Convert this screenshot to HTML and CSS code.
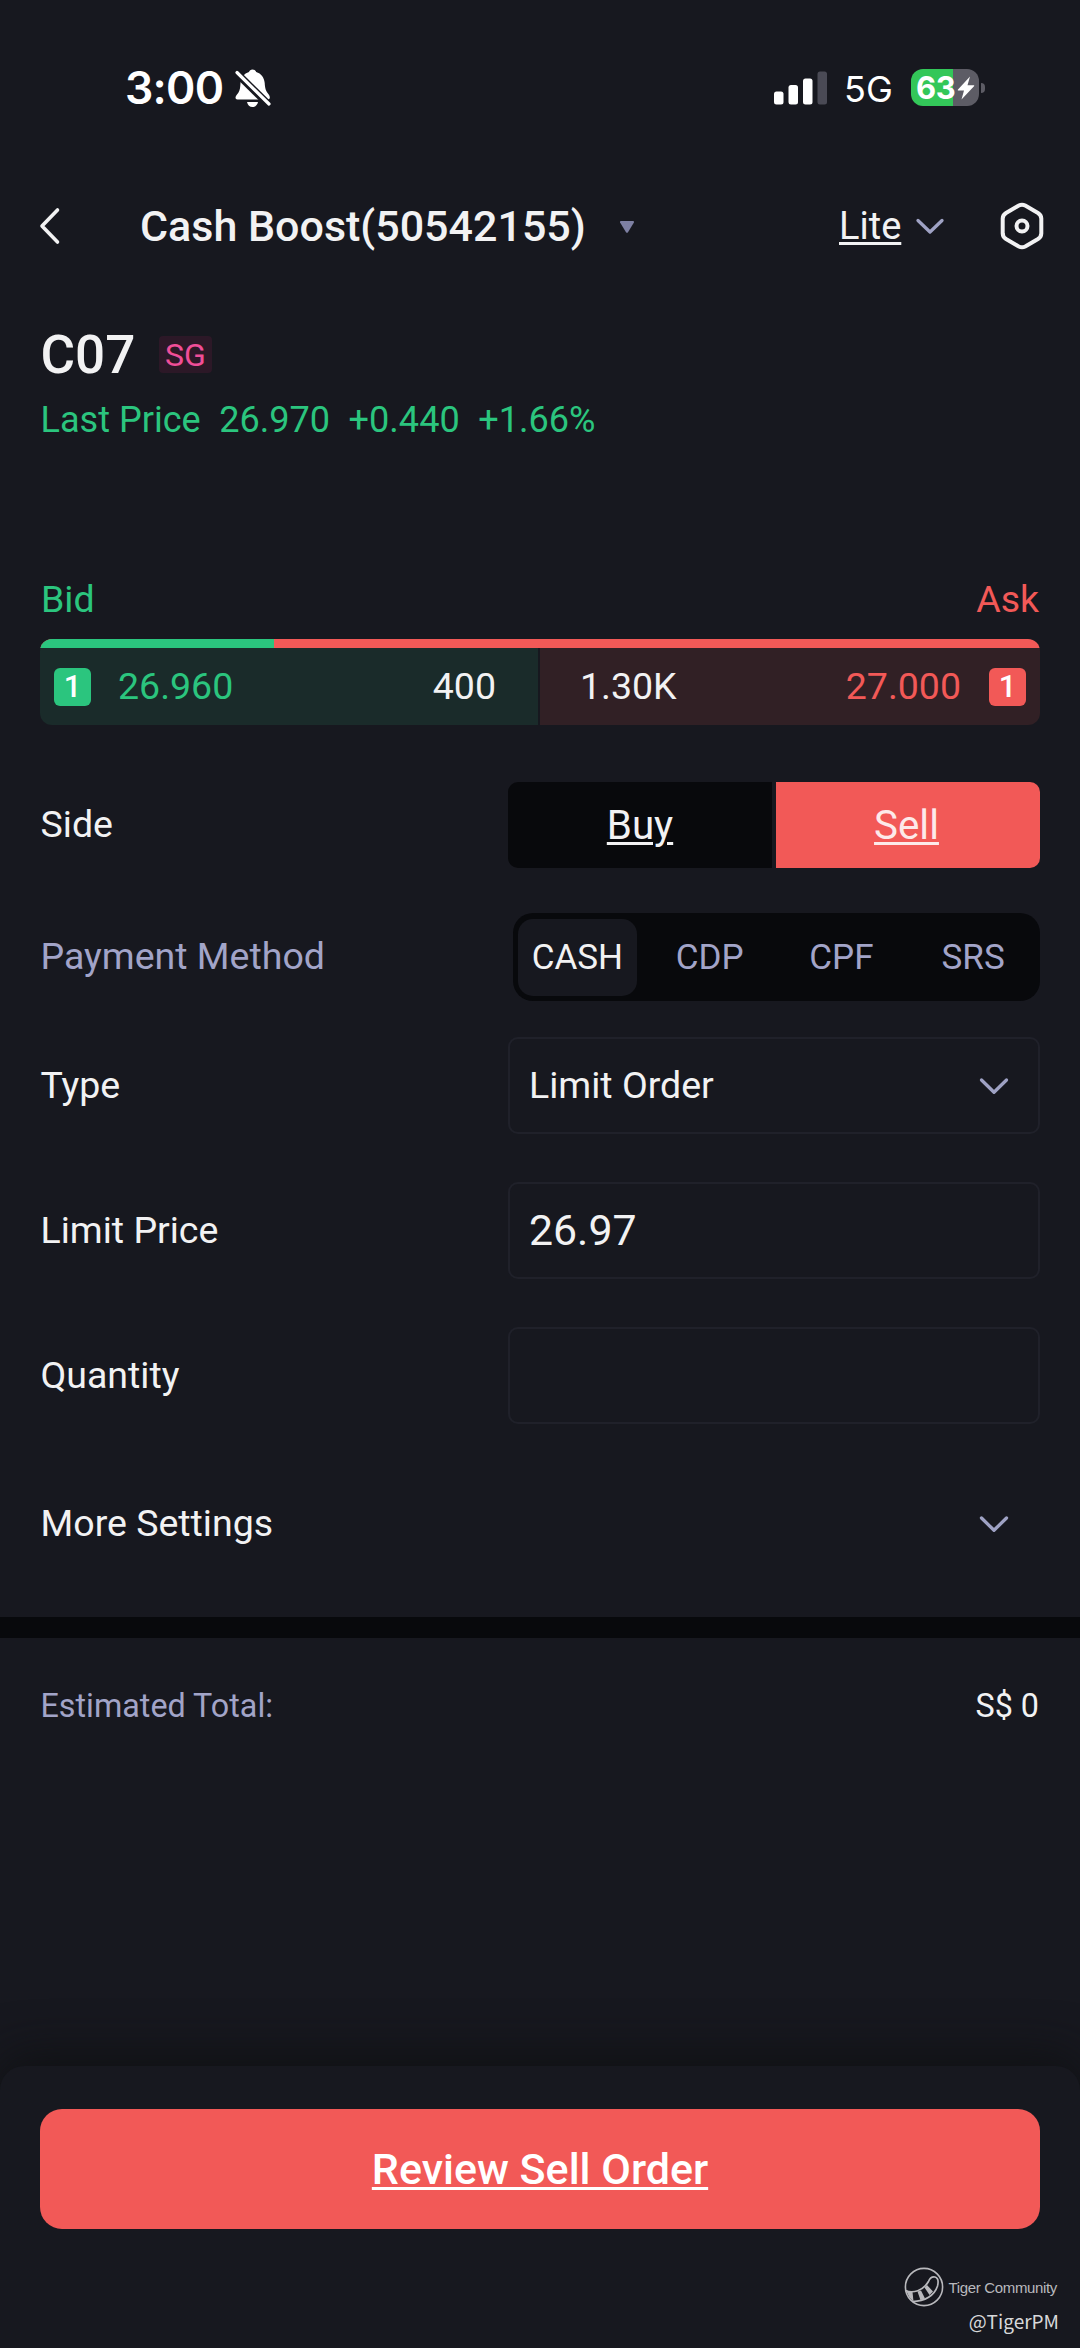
FILE: index.html
```html
<!DOCTYPE html>
<html lang="en">
<head>
<meta charset="utf-8">
<title>Cash Boost – Sell C07</title>
<link rel="stylesheet" href="styles.css">
</head>
<body>
<div class="screen">
  <div class="status">
    <span class="time">3:00</span>
    <svg class="bell" viewBox="0 0 36 38" width="36" height="38">
      <path d="M17.5 0.5c1.8 0 3.200 1 3.700 2.500c5 1.500 8 5.500 8.500 11c.3 5 .8 7.500 4 11.500c1 1.600 1.300 2.500 1 3.800c-.3 1-1 1.200-2 1.200H2.500c-1.300 0-2-.7-2-2c0-1.500 1.500-2.800 3-5c1.500-2.500 1.700-5 2-9.500c.5-5.500 3.500-9.500 8.500-11c.5-1.500 1.700-2.500 3.500-2.500z" fill="#fff"/>
      <path d="M12 33h11c-.6 3-2.700 5-5.500 5s-4.900-2-5.500-5z" fill="#fff"/>
      <path d="M0 2.500L34 36" stroke="#17181f" stroke-width="7.500"/>
      <path d="M2 3.500L34 35" stroke="#fff" stroke-width="3.200" stroke-linecap="round"/>
    </svg>
    <svg class="signal" viewBox="0 0 54 34" width="54" height="34">
      <rect x="0" y="20.500" width="9.500" height="13" rx="2.500" fill="#fff"/>
      <rect x="14.500" y="14" width="9.500" height="19.500" rx="2.500" fill="#fff"/>
      <rect x="29" y="7.500" width="9.500" height="26" rx="2.500" fill="#fff"/>
      <rect x="43.500" y="0.500" width="9.500" height="33" rx="2.500" fill="#4a4a55"/>
    </svg>
    <span class="net">5G</span>
    <div class="battery">
      <span class="level">63</span>
      <svg viewBox="0 0 18 24" width="18" height="24"><path d="M13 .5L1 13.500c-.4.500-.2 1 .4 1H7L4.500 23.500L17 10.300c.5-.5.2-1-.5-1H10.500z" fill="#fff"/></svg>
    </div>
    <span class="nub"></span>
  </div>

  <div class="nav">
    <svg class="back" viewBox="0 0 22 38" width="22" height="38"><path d="M18.500 3L3 19L18.500 35" fill="none" stroke="#f2f2f3" stroke-width="3.600" stroke-linecap="round" stroke-linejoin="round"/></svg>
    <span class="account">Cash Boost(50542155)</span>
    <svg class="caret" viewBox="0 0 16 14" width="16" height="14"><path d="M1.800 1h12.400q1.300.3.700 1.500L9 12.200q-1 1.300-2 0L1.100 2.500q-.6-1.200.7-1.500z" fill="#7e80a3"/></svg>
    <a class="mode">Lite</a>
    <svg class="chevron nav-chevron" viewBox="0 0 30 18" width="30" height="18"><path d="M3 3.500L15 15L27 3.500"/></svg>
    <svg class="hex" viewBox="0 0 44 48" width="44" height="48"><path d="M18.800 3.600Q22 1.900 25.200 3.600L38 11Q41.200 13 41.300 16.600V31.400Q41.200 35 38 37L25.200 44.400Q22 46.100 18.800 44.400L6 37Q2.800 35 2.700 31.400V16.600Q2.800 13 6 11Z"/><circle cx="22" cy="24" r="5.500"/></svg>
  </div>

  <div class="quote">
    <div class="ticker"><span class="symbol">C07</span><span class="market">SG</span></div>
    <div class="last"><span class="last-label">Last Price</span><span class="last-num">26.970</span><span class="last-num">+0.440</span><span class="last-pct">+1.66%</span></div>
  </div>

  <div class="order">
    <div class="book-head"><span class="bid">Bid</span><span class="ask">Ask</span></div>
    <div class="book">
      <div class="ratio"><div class="ratio-bid"></div></div>
      <div class="levels">
        <div class="level-bid"><span class="rank rank-bid">1</span><span class="price">26.960</span><span class="volume">400</span></div>
        <div class="level-ask"><span class="volume">1.30K</span><span class="price">27.000</span><span class="rank rank-ask">1</span></div>
      </div>
    </div>

    <div class="row side-row">
      <span class="label">Side</span>
      <div class="side"><a class="buy">Buy</a><a class="sell">Sell</a></div>
    </div>
    <div class="row pay-row">
      <span class="label pay-label">Payment Method</span>
      <div class="methods"><span class="method active">CASH</span><span class="method">CDP</span><span class="method">CPF</span><span class="method">SRS</span></div>
    </div>
    <div class="row type-row">
      <span class="label">Type</span>
      <div class="field"><span class="value">Limit Order</span><svg class="chevron" viewBox="0 0 30 18" width="30" height="18"><path d="M2.500 3L15 15.300L27.500 3"/></svg></div>
    </div>
    <div class="row field-row">
      <span class="label">Limit Price</span>
      <div class="field"><span class="value amount">26.97</span></div>
    </div>
    <div class="row field-row">
      <span class="label">Quantity</span>
      <div class="field"></div>
    </div>
    <div class="row more-row">
      <span class="label">More Settings</span>
      <svg class="chevron" viewBox="0 0 30 18" width="30" height="18"><path d="M2.500 3L15 15.300L27.500 3"/></svg>
    </div>
  </div>

  <div class="total"><span class="total-label">Estimated Total:</span><span class="total-value">S$ 0</span></div>

  <div class="sheet">
    <a class="submit">Review Sell Order</a>
    <div class="credit">
      <div class="brand">
        <svg viewBox="0 0 40 40" width="40" height="40">
          <circle cx="20" cy="20" r="18.600" fill="none" stroke="#b9b9bd" stroke-width="1.600"/>
          <path d="M1.500 23.500C9 26.500 19 24 24.500 14.500C26 10.500 28 9.500 31 10C34.500 11 34.500 15 33.500 19C30.500 28.500 21 34.500 8.500 34.500" fill="none" stroke="#b9b9bd" stroke-width="1.700"/>
          <path d="M2 23.500l6.500 1.500l1 9.500l-4-4zM13.500 24.500l3.500-1l4 8l-4.500 1.700zM20.500 20.500l2.500-2.500l6 6.500l-3.500 3.500z" fill="#b9b9bd"/>
        </svg>
        <span class="brand-name">Tiger Community</span>
      </div>
      <span class="handle">@TigerPM</span>
    </div>
  </div>
</div>
</body>
</html>
```

FILE: styles.css
```css
* { box-sizing: border-box; }

body {
  margin: 0;
  background: #17181f;
  color: #f2f2f3;
  font-family: Roboto, "Noto Sans", sans-serif;
  font-size: 37.5px;
}

.screen {
  width: 1080px;
  height: 2348px;
  display: flex;
  flex-direction: column;
  overflow: hidden;
}

.screen span, .screen a { white-space: nowrap; }
.screen svg { flex: none; display: block; }

/* Status bar */
.status {
  height: 175px;
  padding-left: 125px;
  display: flex;
  align-items: center;
  color: #fff;
  font-family: Inter, sans-serif;
}
.time { width: 109px; font-size: 44.5px; font-weight: 600; letter-spacing: -0.7px; }
.bell { margin-left: 1px; }
.signal { margin-left: 503px; }
.net { width: 67px; margin: 3px 0 0 16px; font-size: 36px; }
.battery {
  width: 68px;
  height: 37px;
  padding-left: 5px;
  border-radius: 12px;
  display: flex;
  align-items: center;
  background: linear-gradient(90deg, #33c759 0 42px, #5d5c65 42px);
}
.level { width: 41px; font-size: 31px; font-weight: 700; letter-spacing: -0.5px; }
.nub { width: 4px; height: 10px; margin-left: 2px; border-radius: 0 5px 5px 0; background: #5d5c65; }

/* Navigation */
.nav {
  height: 101px;
  padding-left: 39px;
  display: flex;
  align-items: center;
}
.account { width: 458px; margin-left: 79px; font-size: 43px; font-weight: 500; }
.caret { margin: 3px 0 0 21px; }
.mode {
  width: 62px;
  margin-left: 204px;
  font-size: 38px;
  text-decoration: underline;
  text-decoration-thickness: 3px;
  text-underline-offset: 3px;
}
.chevron path, .hex path, .hex circle { fill: none; stroke-linecap: round; stroke-linejoin: round; }
.chevron path { stroke: #9fa2c4; stroke-width: 3.3; }
.nav-chevron { margin-left: 14px; }
.hex { margin-left: 55px; }
.hex path, .hex circle { stroke: #f2f2f3; stroke-width: 4; }

/* Quote */
.quote { height: 269px; padding: 49px 40px 0 40.5px; }
.ticker { height: 59px; display: flex; align-items: center; }
.symbol { width: 118.500px; font-size: 53px; font-weight: 500; }
.market {
  width: 53px;
  height: 37px;
  border-radius: 4px;
  background: #2c1827;
  color: #f04e98;
  font-size: 32px;
  line-height: 38px;
  text-align: center;
}
.last { height: 46px; margin-top: 13px; display: flex; align-items: center; gap: 18.5px; color: #2bc57e; font-size: 36.1px; }

/* Order book */
.order { height: 1072px; padding: 29px 40px 0; }
.book-head { height: 50px; padding: 0 1px; display: flex; justify-content: space-between; align-items: center; }
.bid { color: #2bc57e; }
.ask { color: #f25957; }
.book { height: 86px; margin-top: 15px; border-radius: 12px; overflow: hidden; }
.ratio { height: 9px; background: #f25957; }
.ratio-bid { width: 234px; height: 9px; background: #2bc57e; }
.levels { display: flex; gap: 2px; height: 77px; }
.level-bid, .level-ask { display: flex; align-items: center; justify-content: space-between; }
.level-bid { width: 498px; padding: 0 42px 0 14px; background: #1a2b2a; }
.level-ask { width: 500px; padding: 0 14px 0 40px; background: #312025; }
.price, .volume { padding-bottom: 1px; }
.level-bid .price { margin: 0 auto 0 27px; color: #2bc57e; }
.level-ask .price { margin: 0 28px 0 auto; color: #f25957; }
.rank {
  width: 37px;
  height: 38px;
  border-radius: 6px;
  color: #fff;
  font-size: 31px;
  font-weight: 500;
  line-height: 38px;
  text-align: center;
}
.rank-bid { background: #2bc57e; }
.rank-ask { background: #f25957; }

/* Form rows */
.row { display: flex; align-items: center; justify-content: space-between; }
.label { padding: 0 0 2px 0.5px; }
.side-row { height: 86px; margin-top: 57px; }
.side {
  width: 532px;
  height: 86px;
  display: grid;
  grid-template-columns: 1fr 1fr;
  gap: 4px;
  border-radius: 10px;
  overflow: hidden;
}
.buy, .sell {
  font-size: 40.3px;
  line-height: 87px;
  text-align: center;
  text-decoration: underline;
  text-decoration-thickness: 3px;
  text-underline-offset: 3px;
}
.buy { background: #08090c; }
.sell { padding-right: 3px; background: #f25957; color: #fdeaea; }
.pay-row { height: 88px; margin-top: 45px; }
.pay-label { color: #a2a4c8; }
.methods {
  width: 527px;
  height: 88px;
  padding: 6px 0;
  display: grid;
  grid-template-columns: repeat(4, 1fr);
  border-radius: 20px;
  background: #08090c;
}
.method { padding-right: 2px; color: #a2a4c8; font-size: 35px; line-height: 77px; text-align: center; }
.method.active { margin: 0 8px 0 5px; padding: 0; border-radius: 15px; background: #17181f; color: #f2f2f3; }
.type-row { height: 97px; margin-top: 36px; }
.field-row { height: 97px; margin-top: 48px; }
.field {
  width: 532px;
  height: 97px;
  padding: 0 29px 0 19px;
  display: flex;
  align-items: center;
  justify-content: space-between;
  border: 2px solid #20212a;
  border-radius: 10px;
}
.value { padding-bottom: 1px; }
.amount { font-size: 42.8px; }
.more-row { height: 100px; margin-top: 50px; padding-right: 31px; }

/* Total */
.total {
  height: 449px;
  padding: 48px 41px 0 40.5px;
  display: flex;
  justify-content: space-between;
  border-top: 21px solid #08090c;
  font-size: 32.3px;
  line-height: 40px;
}
.total-label { color: #a2a4c8; }

/* Bottom sheet */
.sheet {
  height: 282px;
  padding: 43px 40px 0;
  border-radius: 24px 24px 0 0;
  background: #17181f;
  box-shadow: 0 -8px 50px rgba(14, 15, 17, 0.85);
}
.submit {
  display: block;
  height: 120px;
  border-radius: 22px;
  background: #f25957;
  color: #fff;
  font-size: 43px;
  font-weight: 500;
  line-height: 120px;
  text-align: center;
  text-decoration: underline;
  text-decoration-thickness: 3px;
  text-underline-offset: 3px;
}
.credit { margin: 38px -19px 0 0; display: flex; flex-direction: column; align-items: flex-end; color: #b9b9bd; }
.brand { height: 40px; display: flex; align-items: center; gap: 5px; padding-right: 2px; }
.brand-name { font-family: "Liberation Sans", sans-serif; font-size: 15px; letter-spacing: -0.35px; }
.handle { margin-top: 1px; font-family: "Noto Sans CJK SC", sans-serif; font-size: 19px; line-height: 26px; color: #d8d8da; }
```
